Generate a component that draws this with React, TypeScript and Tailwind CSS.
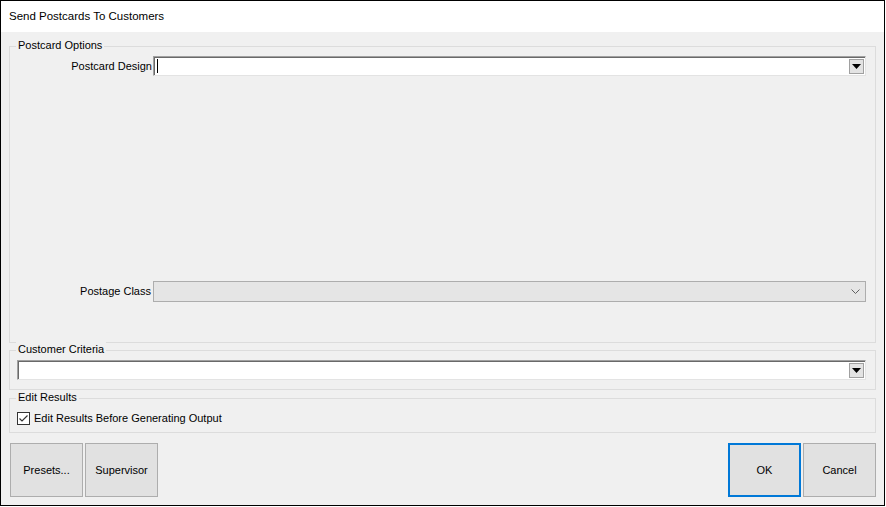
import type { ReactNode } from "react";

const font = { fontFamily: '"Liberation Sans", Arial, sans-serif' };

function GroupBox({ title, className, children }: { title: string; className?: string; children: ReactNode }) {
  return (
    <div className={`relative border border-[#dcdcdc] ${className ?? ""}`}>
      <span className="absolute left-[6px] top-[-9px] bg-[#f0f0f0] px-[2px] text-[11px] leading-[14px] text-black">
        {title}
      </span>
      {children}
    </div>
  );
}

function DropArrow() {
  return (
    <div className="absolute right-[1px] top-[1px] flex h-[15px] w-[15px] items-center justify-center border border-[#a0a0a0] bg-[#e3e3e3]">
      <svg width="9" height="5" viewBox="0 0 9 5">
        <path d="M0 0h9L4.5 5z" fill="#000" />
      </svg>
    </div>
  );
}

function SunkenCombo({ caret }: { caret?: boolean }) {
  return (
    <div className="h-[20px] w-full border-l border-t border-b border-r border-l-[#a0a0a0] border-t-[#a0a0a0] border-b-[#e3e3e3] border-r-[#e3e3e3]">
      <div className="relative h-full border-l border-t border-l-[#696969] border-t-[#696969] bg-white">
        {caret && <div className="absolute left-[2px] top-[1px] h-[14px] w-[1px] bg-black" />}
        <DropArrow />
      </div>
    </div>
  );
}

function Button({ label, primary }: { label: string; primary?: boolean }) {
  return (
    <button
      type="button"
      className={`flex h-[54px] w-[73px] items-center justify-center bg-[#e1e1e1] text-[11px] text-black ${
        primary ? "border-2 border-[#0078d7]" : "border border-[#adadad]"
      }`}
    >
      {label}
    </button>
  );
}

export default function App() {
  return (
    <div className="h-[507px] w-[886px] bg-white" style={font}>
      <div className="flex h-[506px] w-[885px] flex-col border border-black">
        <div className="flex h-[31px] items-center bg-white pl-[8px] text-[11.5px] text-black">
          Send Postcards To Customers
        </div>

        <div className="flex flex-1 flex-col bg-[#f0f0f0] pl-[8px] pr-[8px] pt-[14px] pb-[8px]">
          <GroupBox title="Postcard Options" className="flex flex-1 flex-col">
            <div className="flex flex-1 flex-col pr-[9px] pt-[9px] pb-[40px]">
              <div className="flex items-center">
                <div className="w-[143px] pr-[1px] text-right text-[11px] text-black">Postcard Design</div>
                <div className="flex-1">
                  <SunkenCombo caret />
                </div>
              </div>
              <div className="flex-1" />
              <div className="flex items-center">
                <div className="w-[143px] pr-[2px] text-right text-[11px] text-black">Postage Class</div>
                <div className="relative h-[21px] flex-1 border border-[#adadad] bg-[#e5e5e5]">
                  <svg className="absolute right-[5px] top-[7px]" width="9" height="6" viewBox="0 0 9 6">
                    <path d="M0.5 0.5L4.5 4.5L8.5 0.5" fill="none" stroke="#606060" strokeWidth="1" />
                  </svg>
                </div>
              </div>
            </div>
          </GroupBox>

          <GroupBox title="Customer Criteria" className="mt-[7px]">
            <div className="pl-[7px] pr-[9px] pt-[9px] pb-[9px]">
              <SunkenCombo />
            </div>
          </GroupBox>

          <GroupBox title="Edit Results" className="mt-[8px]">
            <div className="mt-[12px] mb-[6px] flex h-[15px] items-center gap-[4px] pl-[7px]">
              <div className="flex h-[13px] w-[13px] items-center justify-center border border-[#333333] bg-white">
                <svg width="11" height="11" viewBox="0 0 11 11">
                  <path d="M1.5 5.5L4 8L9.5 2.5" fill="none" stroke="#333333" strokeWidth="1.2" />
                </svg>
              </div>
              <span className="text-[11px] text-black">Edit Results Before Generating Output</span>
            </div>
          </GroupBox>

          <div className="mt-[10px] flex">
            <div className="flex gap-[2px] pl-[1px]">
              <Button label="Presets..." />
              <Button label="Supervisor" />
            </div>
            <div className="flex-1" />
            <div className="flex gap-[2px]">
              <Button label="OK" primary />
              <Button label="Cancel" />
            </div>
          </div>
        </div>
      </div>
    </div>
  );
}
